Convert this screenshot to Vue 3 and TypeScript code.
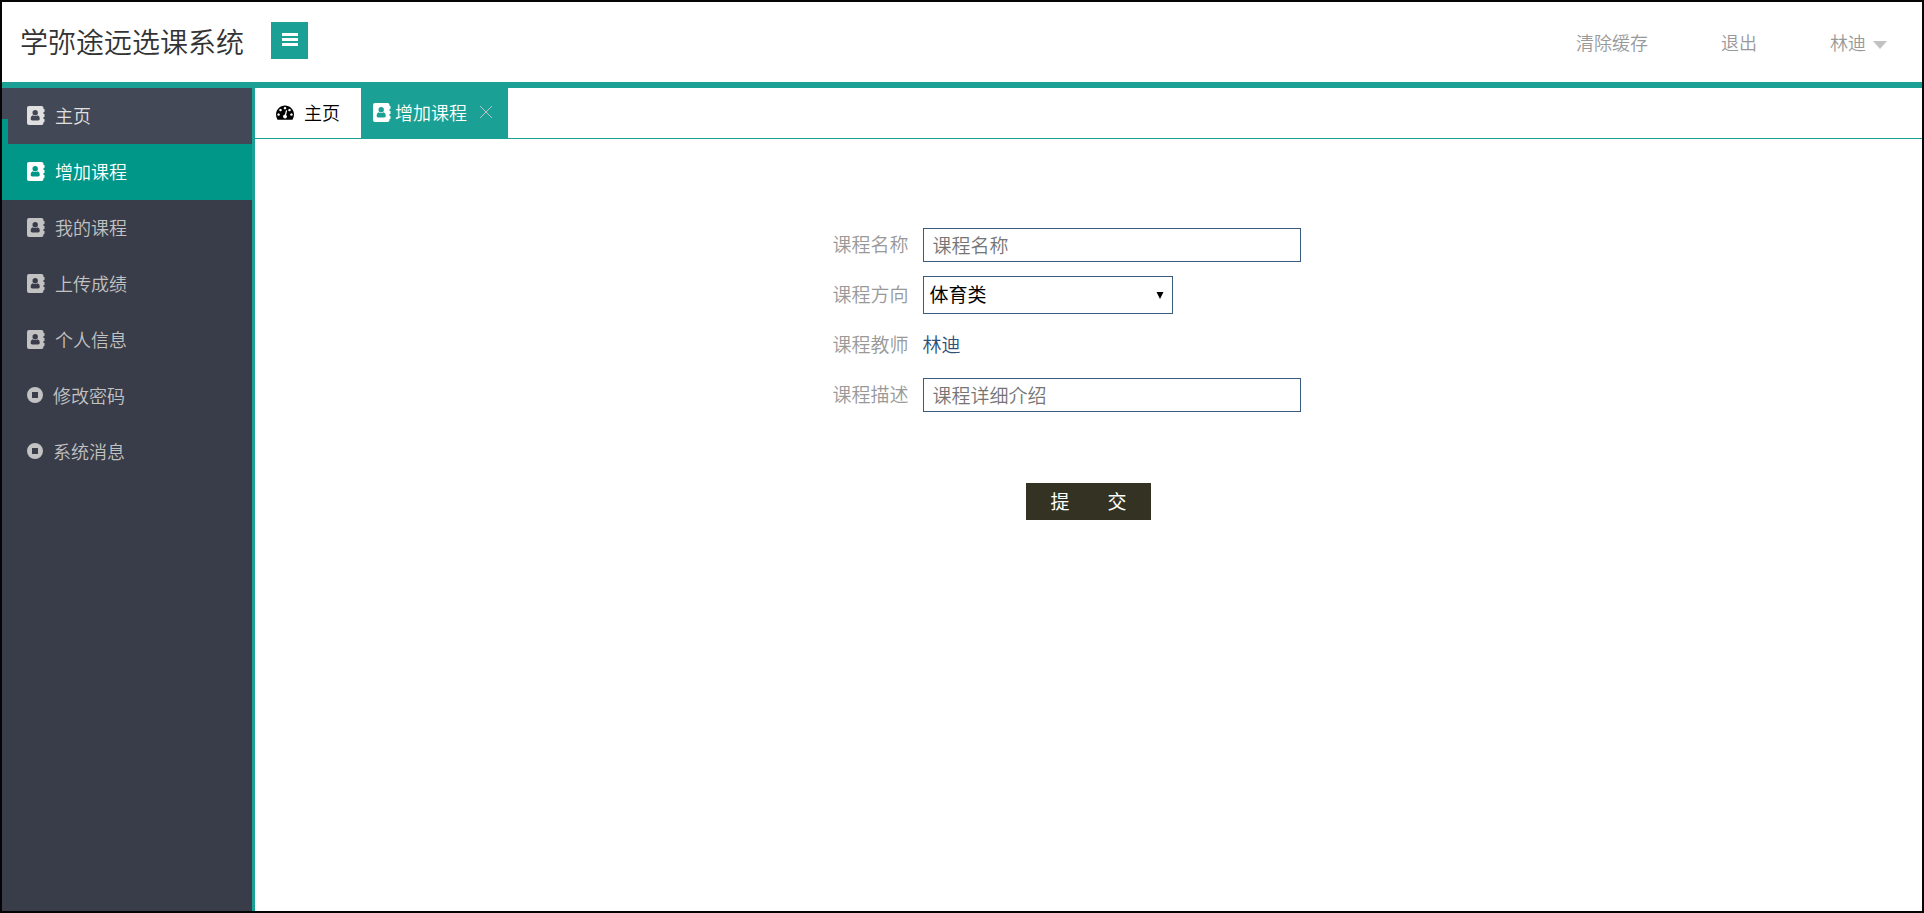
<script setup lang="ts">
import { ref } from 'vue'

type IconName = 'book' | 'stop'

interface MenuItem {
  label: string
  icon: IconName
}

const menu: MenuItem[] = [
  { label: '主页', icon: 'book' },
  { label: '增加课程', icon: 'book' },
  { label: '我的课程', icon: 'book' },
  { label: '上传成绩', icon: 'book' },
  { label: '个人信息', icon: 'book' },
  { label: '修改密码', icon: 'stop' },
  { label: '系统消息', icon: 'stop' },
]

const bookPath =
  'M2 0H14.5Q16.500 0 16.500 2V3H17.500V6H16.500V8H17.500V11H16.500V13H17.500V16H16.500V17Q16.500 19 14.500 19H2Q0 19 0 17V2Q0 0 2 0Z' +
  'M8.200 4A2.700 2.700 0 1 0 8.200 9.400A2.700 2.700 0 1 0 8.200 4Z' +
  'M5.700 9.200Q3.600 9.700 3.600 12.800Q3.600 14.600 5.200 14.600H11.200Q12.800 14.600 12.800 12.800Q12.800 9.700 10.700 9.200Q8.200 11 5.700 9.200Z'

const active = ref(1)
const hovered = ref(0)
const courseName = ref('')
const category = ref('体育类')
const description = ref('')
</script>

<template>
  <div class="app">
    <header class="header">
      <h1 class="title">学弥途远选课系统</h1>
      <button class="toggle" type="button" aria-label="菜单">
        <svg width="16" height="13" viewBox="0 0 16 13">
          <rect width="16" height="3" />
          <rect y="5" width="16" height="3" />
          <rect y="10" width="16" height="3" />
        </svg>
      </button>
      <nav class="actions">
        <a href="#">清除缓存</a>
        <a href="#">退出</a>
        <a href="#" class="user">林迪<span class="caret"></span></a>
      </nav>
    </header>

    <div class="body">
      <nav class="sidebar">
        <a
          v-for="(item, i) in menu"
          :key="item.label"
          href="#"
          class="item"
          :class="{ active: i === active, hovered: i === hovered }"
          @click.prevent="active = i"
        >
          <svg v-if="item.icon === 'book'" class="book" viewBox="0 0 18 19">
            <path fill-rule="evenodd" :d="bookPath" />
          </svg>
          <svg v-else class="stop" viewBox="0 0 16 16">
            <path fill-rule="evenodd" d="M8 0A8 8 0 1 1 8 16A8 8 0 1 1 8 0ZM5 5V11H11V5Z" />
          </svg>
          <span>{{ item.label }}</span>
        </a>
        <span class="indicator"></span>
      </nav>

      <main class="main">
        <div class="tabs">
          <a href="#" class="tab home">
            <svg class="gauge" viewBox="0 0 1792 1792">
              <path d="M384 1152q0-53-37.500-90.500t-90.500-37.500-90.500 37.500-37.500 90.500 37.500 90.500 90.500 37.500 90.500-37.500 37.500-90.500zm192-448q0-53-37.500-90.500t-90.500-37.500-90.500 37.500-37.500 90.500 37.500 90.500 90.500 37.500 90.500-37.500 37.500-90.500zm428 481l101-382q6-26-7.500-48.500t-38.500-29.500-48 6.500-30 39.500l-101 382q-60 5-107 43.500t-63 98.500q-20 77 20 146t117 89 146-20 89-117q16-60-6-117t-72-91zm660-33q0-53-37.500-90.500t-90.500-37.500-90.500 37.500-37.500 90.500 37.500 90.500 90.500 37.500 90.500-37.500 37.500-90.500zm-640-640q0-53-37.500-90.500t-90.500-37.500-90.500 37.500-37.500 90.500 37.500 90.500 90.500 37.500 90.500-37.500 37.500-90.500zm448 192q0-53-37.500-90.500t-90.500-37.500-90.500 37.500-37.500 90.500 37.500 90.500 90.500 37.500 90.500-37.500 37.500-90.500zm320 448q0 261-141 483-19 29-54 29h-1402q-35 0-54-29-141-221-141-483 0-182 71-348t191-286 286-191 348-71 348 71 286 191 191 286 71 348z" />
            </svg>
            <span>主页</span>
          </a>
          <div class="tab current">
            <svg class="book" viewBox="0 0 18 19">
              <path fill-rule="evenodd" :d="bookPath" />
            </svg>
            <span>增加课程</span>
            <button class="close" type="button" aria-label="关闭">
              <svg width="14" height="14" viewBox="0 0 14 14">
                <path d="M1 1L13 13M13 1L1 13" />
              </svg>
            </button>
          </div>
        </div>

        <form class="form" @submit.prevent>
          <div class="row">
            <label for="name">课程名称</label>
            <input id="name" v-model="courseName" class="field" type="text" placeholder="课程名称" />
          </div>
          <div class="row">
            <label for="category">课程方向</label>
            <div class="select">
              <select id="category" v-model="category">
                <option>体育类</option>
              </select>
              <svg class="arrow" width="8" height="7" viewBox="0 0 8 7">
                <path d="M0.500 0H7.500L4 7Z" />
              </svg>
            </div>
          </div>
          <div class="row">
            <label for="teacher">课程教师</label>
            <output id="teacher" class="teacher">林迪</output>
          </div>
          <div class="row">
            <label for="desc">课程描述</label>
            <input id="desc" v-model="description" class="field" type="text" placeholder="课程详细介绍" />
          </div>
          <button class="submit" type="submit"><span>提</span><span>交</span></button>
        </form>
      </main>
    </div>
  </div>
</template>

<style>
body {
  margin: 0;
}
</style>

<style scoped>
.app {
  box-sizing: border-box;
  min-height: 100vh;
  display: flex;
  flex-direction: column;
  border: 2px solid #050507;
  background: #fff;
  font-family: "Noto Sans CJK SC", sans-serif;
  font-size: 18px;
  font-weight: 350;
  line-height: 24px;
}

a {
  color: inherit;
  text-decoration: none;
}

button,
input,
select {
  font: inherit;
  border-radius: 0;
}

svg {
  display: block;
  flex: none;
  fill: currentColor;
}

.header {
  display: flex;
  align-items: center;
  height: 80px;
  padding: 0 35px 0 18px;
  border-bottom: 6px solid #1aa094;
}

.title {
  margin: 0;
  padding-bottom: 2px;
  font-size: 28px;
  font-weight: 350;
  line-height: 40px;
  color: #333;
}

.toggle {
  display: flex;
  align-items: center;
  justify-content: center;
  width: 37px;
  height: 37px;
  margin: 0 auto 3px 27px;
  padding: 0 0 3px;
  border: 0;
  background: #1aa094;
  color: #fff;
}

.actions {
  display: flex;
  gap: 73px;
  color: #999;
}

.user {
  display: flex;
  align-items: center;
  gap: 7px;
}

.caret {
  margin-top: 6px;
  border: 7px solid transparent;
  border-top: 8px solid #c2c2c2;
  border-bottom: 0;
}

.body {
  flex: 1;
  display: flex;
}

.sidebar {
  position: relative;
  flex: none;
  width: 250px;
  border-right: 3px solid #1aa094;
  background: #393d49;
  color: #c2c2c2;
}

.item {
  box-sizing: border-box;
  display: flex;
  align-items: center;
  gap: 10px;
  height: 56px;
  padding: 0 0 2px 25px;
}

.item.hovered {
  background: #434856;
  color: #e0e0e0;
}

.item.active {
  background: #009688;
  color: #fff;
}

.indicator {
  position: absolute;
  left: 0;
  top: 31px;
  width: 6px;
  height: 56px;
  background: #009688;
}

.book {
  width: 18px;
  height: 19px;
}

.stop {
  width: 16px;
  height: 16px;
}

.main {
  flex: 1;
  min-width: 0;
}

.tabs {
  display: flex;
  height: 50px;
  border-bottom: 1px solid #1aa094;
}

.tab {
  box-sizing: border-box;
  display: flex;
  align-items: center;
  padding-bottom: 2px;
  color: #000;
}

.home {
  gap: 10px;
  padding-left: 21px;
  padding-right: 21px;
}

.gauge {
  width: 18px;
  height: 18px;
}

.current {
  gap: 4px;
  padding-left: 12px;
  padding-right: 15px;
  background: #1aa094;
  color: #fff;
}

.close {
  margin-left: 8px;
  padding: 0;
  border: 0;
  background: none;
  color: #c2c2c2;
}

.close path {
  stroke: currentColor;
}

.form {
  display: flex;
  flex-direction: column;
  width: 512px;
  margin: 0 auto;
  padding-top: 81px;
  font-size: 19px;
}

.row {
  display: flex;
  align-items: center;
  gap: 14px;
  height: 50px;
}

.row label,
.teacher {
  padding-bottom: 2px;
}

.row label {
  width: 76px;
  color: #999;
}

.field {
  box-sizing: border-box;
  width: 378px;
  height: 34px;
  padding: 0 9px 2px;
  border: 1px solid #3a5b7d;
  background: #fff;
}

.field::placeholder {
  color: #757575;
  opacity: 1;
}

.select {
  position: relative;
  width: 250px;
}

.select select {
  display: block;
  box-sizing: border-box;
  width: 100%;
  height: 38px;
  padding: 0 24px 2px 6px;
  border: 1px solid #3a5b7d;
  background: #fff;
  color: #000;
  font-weight: 400;
  appearance: none;
}

.arrow {
  position: absolute;
  right: 9px;
  top: 16px;
  pointer-events: none;
}

.teacher {
  color: #2f5278;
}

.submit {
  display: flex;
  align-items: center;
  justify-content: center;
  align-self: center;
  gap: 38px;
  width: 125px;
  height: 37px;
  margin-top: 63px;
  padding: 0 0 2px;
  border: 0;
  background: #333223;
  color: #fff;
  font-weight: 400;
}
</style>
